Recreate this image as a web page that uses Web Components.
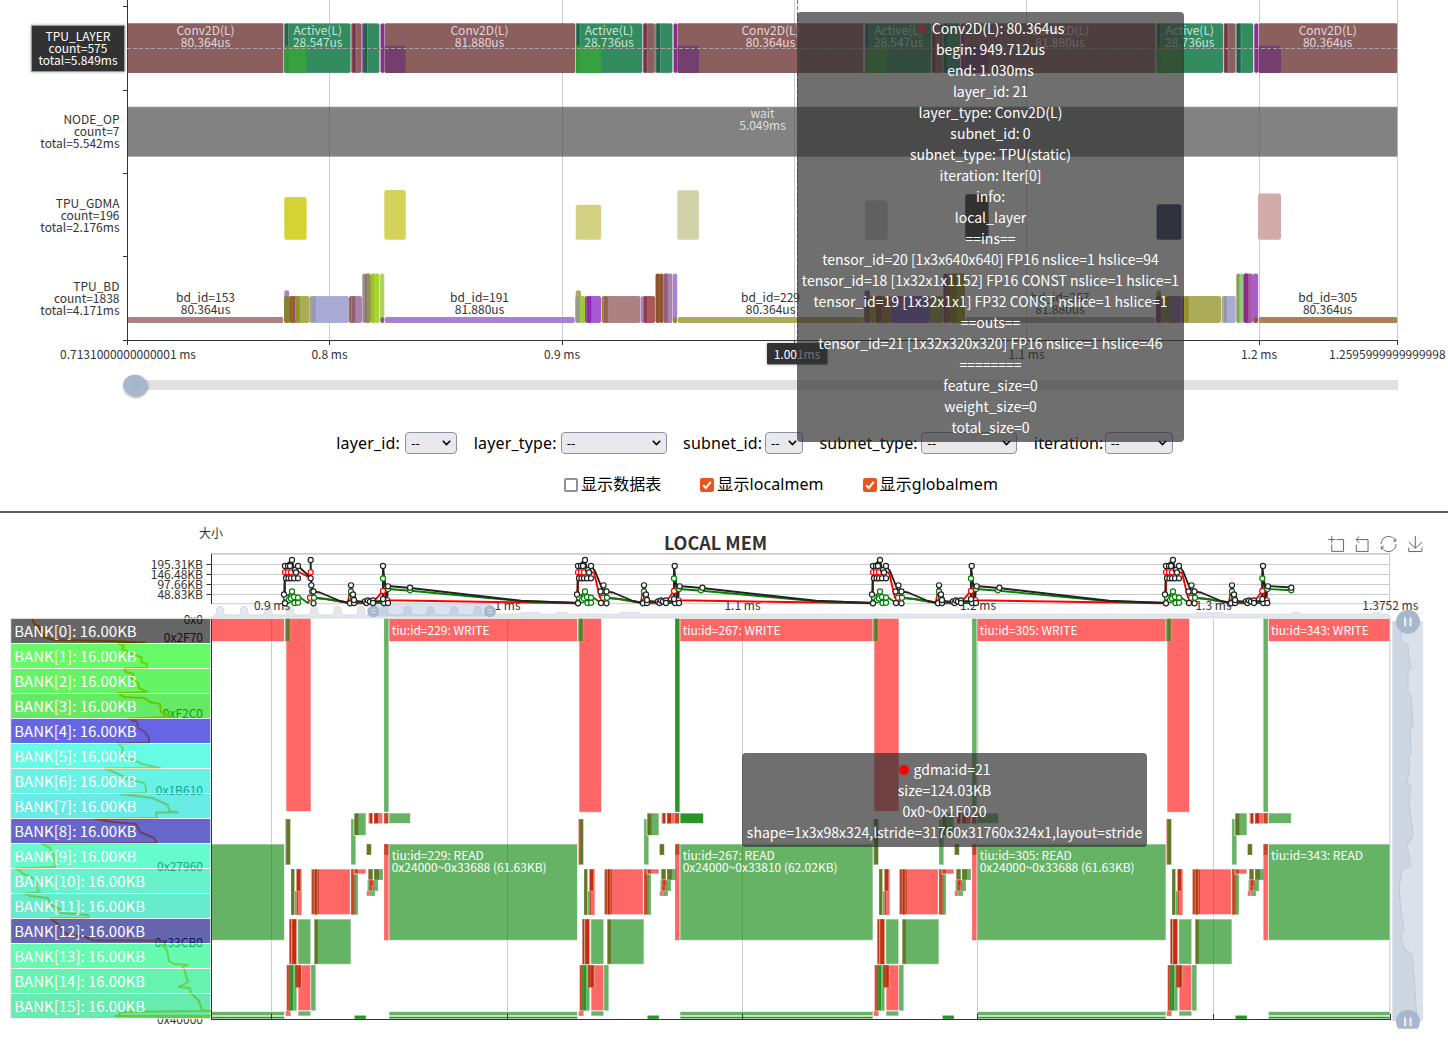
<!DOCTYPE html>
<html lang="zh">
<head>
<meta charset="utf-8">
<title>TPU Profile</title>
<style>
html,body{margin:0;background:#fff}
body{font-family:"Noto Sans CJK SC","Noto Sans",sans-serif;width:1448px;height:1043px;overflow:hidden}
</style>
</head>
<body>
<profile-page></profile-page>
<script>
const FONT='"Noto Sans CJK SC","Noto Sans",sans-serif';
const rect=(x1,y1,x2,y2,f,r=0,extra='')=>`<rect x="${x1}" y="${y1}" width="${(x2-x1).toFixed(2)}" height="${(y2-y1).toFixed(2)}" fill="${f}" rx="${r}" ${extra}/>`;
const line=(x1,y1,x2,y2,c,extra='')=>`<path d="M${x1} ${y1}L${x2} ${y2}" stroke="${c}" fill="none" ${extra}/>`;
const text=(x,y,s,a='middle',c='#333',size=12,extra='')=>`<text x="${x}" y="${y+size*.36}" text-anchor="${a}" fill="${c}" font-size="${size}" ${extra}>${s}</text>`;

/* Gantt timeline of the TPU engines */
class TimelineChart extends HTMLElement{
  connectedCallback(){
    let s='';
    const grid=[329.5,562.5,794.5,1026.5,1259.5,1397.5];
    for(const x of grid) s+=line(x,0,x,340,'#ccc');
    const conv='#8c5f5f',green='#338b60',dark='#1f6349',maroon='#7a3247',purple='#8b2d8b';
    const soft='stroke="#fff" stroke-opacity=".35" stroke-width=".6"';
    const bar=(x1,x2,f,y=23.3,r=2)=>rect(x1,y,x2,73,f,r,soft);
    for(const [a,b] of [[127.5,283.5],[385,575],[677.5,863.5],[965,1155.5],[1259,1397.2]]) s+=rect(a,23.3,b,73,conv,1);
    const layers=[[284,306.5,350.8,352,361.7,363,379.6,384.7,405.7],[575.5,601.3,642.5,643.3,655,656,672.6,677.5,699],
      [864.5,887.5,931.5,932,943,943.5,960,965,988],[1156.2,1181.5,1223.3,1224,1235.7,1236.5,1253.4,1258.5,1281]];
    for(const [a,b,c,d,e,f,g,h,i] of layers){
      s+=bar(a,a+2,purple)+bar(a+.5,c,green)+bar(a+.7,a+4.5,dark)+bar(c+.3,c+3,purple)+bar(d,e,conv)+bar(d,d+4,maroon)
        +bar(e,e+2,purple)+bar(f,g,green)+bar(f,f+4.5,dark)+bar(g+.8,h,purple)+rect(a+.5,45.7,b,73,'#37a03f',2)+rect(a+.5,45.7,a+4.5,73,'#329a3a',2)+rect(h,45.7,i,73,'#743f6f',2);
    }
    s+=rect(127.5,107,1397.2,156.5,'#828282',0,'stroke="#aaa" stroke-width=".7"');
    for(const x of grid.slice(0,5)) s+=line(x,107,x,156.5,'#737373');
    for(const [a,y,b,f] of [[284.3,197,306.6,'#d3d333'],[384.3,190,405.8,'#d3d35c'],[575.7,204.7,601.2,'#d3d182'],[677.3,190.2,698.9,'#d2d2a8'],
      [865,200.5,887.7,'#cbcbcb'],[965.2,194.3,988.5,'#2f2f2f'],[1156.5,204.2,1181.5,'#35355d'],[1258,193.6,1281,'#d3abab']])
      s+=rect(a,y,b,239.8,f,2.5);
    for(const [a,b,f] of [[127.5,283.2,'#ab8181'],[385,574.7,'#a881d4'],[678,863.7,'#abab59'],[965.5,1155.5,'#a4a4a4'],[1259,1397.2,'#ab8159']])
      s+=rect(a,317,b,323,f,1.5,'');
    const bd=[
      [284.3,289.2,290.3,'#a881d4'],[284,290,296,'#84842c'],[289,295,296,'#99631f'],[293,297,296,'#91468c'],[295.5,309.5,296,'#abab59'],[295.5,300,296,'#93932a'],[309.5,314,296,'#a0a080'],[312,349,296,'#a9abd4'],[312,316,296,'#9496bb'],[349,354,296,'#a0623a'],[351.5,362,296,'#ab81ab'],[351.5,355.5,296,'#8f5f73'],
      [362.3,366,273.5,'#9b8a8a'],[365,370,273.5,'#877060'],[367,371,273.5,'#929248'],[371,375.5,273.5,'#96c21f'],[374.5,379.5,273.5,'#a9d42e'],[380,384.3,273.5,'#acd45e'],[380.3,384.3,317,'#8c5a78'],
      [575.7,581,290.3,'#abab59'],[575.3,580.7,296,'#9a9a8a'],[580,585.5,296,'#9fc933'],[585,588,296,'#9c4b2b'],[586.5,601,296,'#a959d4'],[586.5,591.5,296,'#8a2bb5'],[601.5,606,296,'#a8842a'],[603.5,640.5,296,'#ab8181'],[603.5,608,296,'#936257'],[640.7,645,296,'#a783c8'],[643.5,655.2,296,'#a95959'],[643.5,647.3,296,'#93394e'],
      [655.5,660,273.5,'#8a5030'],[659,663.7,273.5,'#94581f'],[663.5,672.5,273.5,'#ab81ab'],[663.5,668,273.5,'#8f5f88'],[672.8,677.2,273.5,'#a881d4'],[673,677.2,317,'#8f8f1f'],
      [864.5,870,290.3,'#8c45c0'],[864.2,870,296,'#87544a'],[870,875,296,'#94921f'],[875,891,296,'#a06a35'],[876,882,296,'#7f4524'],[891,930,296,'#7655bb'],[891,897,296,'#66559c'],[930,943,296,'#94943f'],
      [943.3,947.3,273.5,'#88385f'],[947,951,273.5,'#875c24'],[951,965,273.5,'#97971f'],[951,957,273.5,'#7c7c14'],
      [1156.5,1161,290.3,'#7fa316'],[1156,1162,296,'#783a6c'],[1161,1166,296,'#84842c'],[1166,1170,296,'#6b7c2d'],[1169,1181.5,296,'#816296'],[1181.8,1185,296,'#8a2bb5'],[1184,1221,296,'#abab59'],[1184,1189,296,'#93932a'],[1221.5,1225,296,'#abab81'],[1223.5,1235.8,296,'#a9abd4'],[1223.5,1227,296,'#9496ab'],
      [1236.3,1240.5,273.5,'#8d9d50'],[1239.5,1243.8,273.5,'#8fcb82'],[1243.5,1253,273.5,'#ab59a9'],[1243.5,1248.5,273.5,'#8f2b85'],[1253,1258.2,273.5,'#a959d4'],[1253.7,1258.2,317,'#8f5a2a']];
    for(const [a,b,y,f] of bd) s+=rect(a,y,b,323,f,2,'stroke="#fff" stroke-opacity=".2" stroke-width=".4"');
    s+=line(127.5,0,127.5,345,'#333')+line(123,340.5,1397.5,340.5,'#333');
    for(const y of [6.5,90.5,173.5,256.5]) s+=line(123,y,127,y,'#333');
    for(const x of grid) s+=line(x,340,x,345,'#333');
    const pale='#fff" fill-opacity=".75';
    const two=(x,y,a,b,c)=>text(x,y,a,'middle',c)+text(x,y+12,b,'middle',c);
    s+=two(205.5,30.5,'Conv2D(L)','80.364us',pale)+two(479.5,30.5,'Conv2D(L)','81.880us',pale)+two(770.5,30.5,'Conv2D(L)','80.364us',pale)+two(1060,30.5,'Conv2D(L)','81.880us',pale)+two(1327.7,30.5,'Conv2D(L)','80.364us',pale);
    s+=two(317.7,30.5,'Active(L)','28.547us',pale)+two(609,30.5,'Active(L)','28.736us',pale)+two(898.5,30.5,'Active(L)','28.547us',pale)+two(1189.7,30.5,'Active(L)','28.736us',pale);
    s+=two(762.5,113.5,'wait','5.049ms',pale);
    [[205.5,153,'80.364us'],[479.5,191,'81.880us'],[770.5,229,'80.364us'],[1060,267,'81.880us'],[1327.7,305,'80.364us']].forEach(([x,n,t])=>s+=two(x,297.5,'bd_id='+n,t,'#333'));
    [['NODE_OP','count=7','total=5.542ms'],['TPU_GDMA','count=196','total=2.176ms'],['TPU_BD','count=1838','total=4.171ms']].forEach((l,i)=>l.forEach((t,j)=>s+=text(119.5,[119.5,203.5,286.5][i]+12*j,t,'end')));
    s+=line(127,48.5,1397,48.5,'#aaa2a2','stroke-dasharray="4 2"')+line(797.5,0,797.5,340,'#777','stroke-dasharray="4 2"');
    s+=rect(31.5,25.5,124.5,71.5,'#333',0,'stroke="#999" filter="url(#sh)"');
    ['TPU_LAYER','count=575','total=5.849ms'].forEach((t,j)=>s+=text(78,36.5+12*j,t,'middle','#fff'));
    [[128,'0.7131000000000001 ms'],[329.5,'0.8 ms'],[562,'0.9 ms'],[1026.5,'1.1 ms'],[1259,'1.2 ms']].forEach(([x,t])=>s+=text(x,354.5,t));
    s+=text(1329,354.5,'1.2595999999999998','start');
    s+=rect(767,343,827.5,364.5,'#333',1,'filter="url(#sh)"')+text(797,354.5,'1.001ms','middle','#fff');
    s+=rect(127,380,1398,390,'#e1e1e1');
    s+=`<ellipse cx="134.8" cy="385.2" rx="11.7" ry="10.5" fill="#a7b7cc" filter="url(#sh2)"/>`;
    for(const y of [382.5,385,387.5]) s+=line(133,y,140,y,'#9caaba','stroke-width=".7"');
    this.attachShadow({mode:'open'}).innerHTML=`<style>:host{display:block;height:410px;flex:none}svg{display:block;font-family:${FONT}}</style>
    <svg width="1448" height="410" viewBox="0 0 1448 410"><defs><filter id="sh" x="-20%" y="-30%" width="140%" height="160%"><feDropShadow dx="0" dy="0" stdDeviation="1.5" flood-color="#aaa"/></filter><filter id="sh2" x="-50%" y="-50%" width="200%" height="200%"><feDropShadow dx="1" dy="1.5" stdDeviation="1.5" flood-color="#000" flood-opacity=".45"/></filter></defs>${s}</svg>`;
  }
}
customElements.define('timeline-chart',TimelineChart);

/* Labelled dropdown */
class FilterSelect extends HTMLElement{
  connectedCallback(){
    const lw=this.getAttribute('label-width'),w=this.getAttribute('width');
    this.attachShadow({mode:'open'}).innerHTML=`<style>
    :host{display:flex;align-items:center;gap:4px;font:16px/22px "Noto Sans","Noto Sans CJK SC",sans-serif;color:#000}
    label{width:${lw}px;white-space:nowrap;letter-spacing:.17px}
    .box{box-sizing:border-box;width:${w}px;height:22px;border:1px solid #8f8f9d;border-radius:4px;background:#e9e9ed;display:flex;align-items:center;justify-content:space-between;padding:0 5px;font-size:13.33px}
    </style><label><slot></slot></label><span class="box"><span>--</span><svg width="9" height="6" viewBox="0 0 9 6"><path d="M.8.8L4.5 4.6 8.2.8" fill="none" stroke="#000" stroke-width="1.6"/></svg></span>`;
  }
}
customElements.define('filter-select',FilterSelect);

class CheckOption extends HTMLElement{
  connectedCallback(){
    const on=this.hasAttribute('checked');
    this.attachShadow({mode:'open'}).innerHTML=`<style>
    :host{display:flex;align-items:center;gap:4px;font:16px/24px "Noto Sans","Noto Sans CJK SC",sans-serif;color:#000;white-space:nowrap;letter-spacing:.07px}
    .b{box-sizing:border-box;width:14px;height:14px;margin-right:-1px;border-radius:2px;border:${on?'0':'2px solid #8f8f9d'};background:${on?'#e95420':'#fff'};display:flex;position:relative;top:1px}
    </style><span class="b">${on?'<svg width="14" height="14"><path d="M3.2 7.2L5.8 9.9 10.8 3.8" fill="none" stroke="#fff" stroke-width="2"/></svg>':''}</span><span><slot></slot></span>`;
  }
}
customElements.define('check-option',CheckOption);

/* Local memory occupancy */
class MemoryChart extends HTMLElement{
  connectedCallback(){
    let s='';
    s+=text(715.5,544,'LOCAL MEM','middle','#333',18,'font-weight="bold"')+text(211,533.5,'大小');
    const icon=(x,y,k,d)=>`<path transform="translate(${x} ${y}) scale(${k})" d="${d}" fill="none" stroke="#666" stroke-width="${1/k}"/>`;
    s+=icon(1328.2,536,.265,'M0,13.5h26.9 M13.5,26.9V0 M32.1,13.5H58V58H13.5 V32.1');
    s+=icon(1353.5,536,.265,'M22,1.4L9.9,13.5l12.3,12.3 M10.3,13.5H54.9v44.6 H10.3v-26');
    s+=icon(1380.5,536,.268,'M3.8,33.4 M47,18.9h9.8V8.7 M56.3,20.1 C52.1,9,40.5,0.6,26.8,2.1C12.6,3.7,1.6,16.2,2.1,30.6 M13,41.1H3.1v10.2 M3.7,39.9c4.2,11.1,15.8,19.5,29.5,18 c14.2-1.6,25.2-14.1,24.7-28.5');
    s+=icon(1407.5,536,.268,'M4.7,22.9L29.3,45.5L54.7,23.4M4.6,43.6L4.6,58L53.8,58L53.8,43.6M29.2,45.1L29.2,0');
    /* overview slider */
    s+=rect(213,604,1391.5,616.5,'#fff');
    let d='M214 615.5';
    for(const x of [220,244,268,290,314,337.5,361,384,407.5,430.5,454,477.5]) d+=`L${x-5} 615 L${x-3.5} 613 L${x-3} 608 L${x-2} 606.5 L${x+2} 606.8 L${x+3.3} 608 L${x+4} 614 L${x+6} 615`;
    for(let x=490;x<1388;x+=4){const h=x<540&&x>518||x>556&&x<570||x>620&&x<640||x>1196&&x<1224||x>1290&&x<1300||x>1370&&x<1382;d+=`L${x} ${h?612:615} L${x+2} ${h?613.5:613.5}`;}
    s+=`<path d="${d}L1390 616.5L214 616.5Z" fill="#e4e7ec" stroke="#d0d6de" stroke-width=".8"/>`;
    s+=rect(373,604,490,616.5,'#87a5cf',0,'fill-opacity=".32"');
    s+=rect(11,616.3,1391.5,618.7,'#e2e5e9',0,'')+rect(0,616,210,618,'#fff');
    /* size plot frame */
    s+=line(211,553.8,1389.5,553.8,'#ccc','stroke-width="1.7"')+line(1389.5,553,1389.5,604,'#ccc');
    for(const y of [564.5,574.5,584.5,594.5,603.7]) s+=line(211,y,1389.5,y,'#ccc');
    s+=line(211.5,554,211.5,604,'#333');
    ['195.31KB','146.48KB','97.66KB','48.83KB'].forEach((t,i)=>{const y=564.5+10*i;s+=line(206.5,y,211,y,'#333')+text(203,y,t,'end')});
    [[272,'0.9 ms'],[507.5,'1 ms'],[742.5,'1.1 ms'],[978,'1.2 ms'],[1213.5,'1.3 ms'],[1390.3,'1.3752 ms']].forEach(([x,t])=>s+=text(x,605.5,t));
    for(const x of [373.3,490]) s+=`<circle cx="${x}" cy="611.3" r="6" fill="#a7b7cc"/>`+line(x-2.5,609.8,x+2.5,609.8,'#dde4ee')+line(x-2.5,612.8,x+2.5,612.8,'#dde4ee');
    /* curves */
    const bases=[286,579,874,1167],reads=[389,680,977,1268.3],P=a=>a.map(p=>p.join(' ')).join('L');
    const curve=(c,pts)=>`<path d="M${P(pts)}" fill="none" stroke="${c}" stroke-width="1.9" stroke-linejoin="round"/>`;
    const dot=(c,x,y)=>`<circle cx="${x}" cy="${y}" r="2.55" fill="#fff" stroke="${c}" stroke-width="1.2"/>`;
    bases.forEach((b,i)=>{
      const r=reads[i],next=i<3?bases[i+1]-3:null,first=i===0;
      const tailR=next?[[r+90,601.8],[next,603.3]]:[],tailG=next?[[r+21.5,590.7],[next-55,601.2],[next,602.7]]:[[r+23,590.3]],tailB=next?[[r+21.5,588],[next-55,600.7],[next,603]]:[[r+23,587.5]];
      s+=curve('red',[[b-1,603],[b-1,572.3],[b+11,572.3],...(first?[[b+13,572],[b+24.5,578]]:[[b+15,572.5],[b+21,597.7]]),[b+28,597.5],[b+40,599],[b+64,603.3],[b+86,603.3],[r-6,591],[r-1,600.3],...tailR]);
      s+=curve('green',[[b-1,603],[b-1,599],[b+6,591.5],[b+9,602],[b+13,596.7],[b+22,603],[b+24.5,597.7],[b+40,599],[b+64,603],[b+65,591.5],[b+68,601],[b+84,603],[r-6,603],[r-6,578.5],[r-1,589],...tailG]);
      s+=curve('#222',[[b-2,603],[b-1,566],[b+6,560],[b+8,570],[b+12,566],...(first?[[b+25,578],[b+24.5,560],[b+25.5,585]]:[[b+16,571],[b+24,591]]),[b+27,591.5],[b+34,592.5],[b+54,601],[b+62,602.5],[b+65,585.3],[b+67,594.5],[b+71,601.5],[b+84,601.5],[r-6,601],[r-6,566],[r-2,603],[r-1,586],...tailB]);
      for(const [x,y] of [[-1,572.3],[2,572.3],[5,572.3],[10,572.3],[24,597.7],[65,597.7]]) s+=dot('red',b+x,y);
      if(first) s+=dot('red',b+24.7,572.3);
      for(const [x,y] of [[-1,603],[0,597.5],[3,600],[6,591.5],[5,598.5],[8,597],[8.5,603],[12,597.7],[12,602.7],[26,591.5],[28,597.7],[65,591.5],[67,597.7]]) s+=dot('green',b+x,y);
      s+=dot('red',r-6,591)+dot('red',r-1.5,600.3)+dot('green',r-6,578.5)+dot('green',r-1,589)+dot('green',r+(next?21:23),590.3);
      for(const [x,y] of [[-1,566],[2,566],[4,566],[0,578.3],[2.5,578.3],[5,578.3],[8,578.3],[12,578.3],[6,560],[9,570],[10,572.5],[12,566],[-2,594.5],[-1,603.3],[27.5,591.5],[27.5,603.3],[65,585.3],[67,594.5],[64,603.3],[68,603],[68,600],[79,601.5],[80.5,603],[82,600.5],[84,601.5],[87,600.5],[87,603]]) s+=dot('#222',b+x,y);
      s+=first?dot('#222',b+24.7,560)+dot('#222',b+24.7,578.3)+dot('#222',b+25.3,585.3):dot('#222',b+24.5,585.3)+dot('#222',b+21.5,591.5)+dot('#222',b+22,603);
      const q=first?0:.7;
      for(const [x,y] of [[-6+q,566],[-1+q,586.3],[next?21+2*q:23,587.7],[-5,603],[-6,599],[-1,603]]) s+=dot('#222',r+x,y);
    });
    /* memory map */
    let m='';
    for(const x of [271.5,507.5,742.5,977.5,1213.5]) m+=line(x,619,x,1019,'#ccc');
    m+=line(1390,619,1390,1019,'#ccc','stroke-width="1.5"');
    const draw=(f,a,b,y1,y2)=>m+=rect(a,y1,b,y2,f,0,`fill-opacity=".6" stroke="#fff" stroke-opacity="${b-a<12?.4:.65}" stroke-width="${b-a<12?.5:1}"`);
    const R=(...p)=>draw('#f00',...p),G=(...p)=>draw('#008000',...p);
    const spans=[[211,284.5],[389,577.5],[680,873],[977,1166],[1268.3,1390]];
    for(const [a,b] of spans){R(a,b,618.5,641.5);G(a,b,844,940.3);G(a,b,1011.5,1015.9);G(a,b,1016,1019);G(a,b,1016.4,1018.8);}
    const items=[
      'R0,25,618,811.5','G-1,4,618,641.5','R-.7,1,819,864.7','R.5,4.2,819,864.7','G0,4.4,819,864.7',
      'G65,69.7,819,864.7','R68,72.5,813,835.5','G68,80,813,835.5',
      'R82.5,86.5,813,823.5','G83.5,86.5,813,823.5','R83.5,86.5,813,823.5',
      'R88,96.5,813,823.5','G88,92.5,813,823.5','R88,92.5,813,823.5',
      'R80.5,85.2,844,855','G80.7,85.2,844,855',
      'G25,29.5,869,914.7','G28.5,33,869,914.7','R25.3,64.3,869,914.7','G28.5,31,869,914.7','R28.5,31,869,914.7',
      'G65,69,869,914.7','R65,69.5,869,914.7','G68.5,72,869,914.7','R68,80,869,874',
      'R82,86.5,869,880','G82.5,87,869,880','R88,93,869,880','G88,97,869,880',
      'G81.5,86,880,891','R83,88,880,891','G87,92,880,891','R84,87,880,886',
      'R80.7,84,891,896','G84,89,891,896',
      'R5,8.3,869,915','G5,8.6,869,915','G8.7,12,891,915','R10.5,15.8,869,915','G10.5,14.7,869,891','R10.5,14.7,869,891',
      'R3,5,919,964.3','G3.5,7,919,964.3','R3.5,5.7,919,964.3','R6,10.5,919,964.3','G6,10.5,919,964.3','R6,10.5,919,964.3',
      'G11.7,24.8,919,964.3','R28,32,919,964.3','G28,65,919,964.3',
      'R.7,4.5,965,1010.7','G1.5,4.5,965,1010.7','R.7,3,965,1010.7','G4.5,10.7,965,1010.7','G3,7.3,965,1010.7',
      'R12,24.8,965,1010.7','G9,15.3,965,987.7','R9,15,965,987.7','G25,29.7,965,1010.7',
      'R-.3,4.7,1011,1016','G12,24.8,1011,1016','G68.5,80,1015.5,1019','G68.5,80,1015.5,1019'];
    bases.forEach((b,i)=>{
      for(const t of items){
        let [x1,x2,y1,y2]=t.slice(1).split(',').map(Number);
        if(y2===811.5&&(i===1||i===3)){x2=22.5;y2=812.3}
        (t[0]==='R'?R:G)(b+x1,b+x2,y1,y2);
      }
      const r=reads[i];
      G(r-5,r-.3,618,812);G(r-5,r-.3,813,823.5);R(r-5,r-.3,813,823.5);G(r,r+(i===3?23:i===1?23.5:21.5),813,823.5);G(r-5,r-.3,844,855);R(r-5,r-.3,844,940.3);
      if(i===1){G(r-5,r-.3,618,812);G(r,r+23.5,813,823.5);}
    });
    s+=`<clipPath id="plot"><rect x="211" y="618.7" width="1179.5" height="401"/></clipPath><g clip-path="url(#plot)">${m}</g>`;
    s+=line(211.5,619,211.5,1019,'#333')+line(211,1019.5,1390.5,1019.5,'#333')+line(1390.5,1014,1390.5,1020,'#333')+line(1213.5,1014,1213.5,1019,'#333');
    for(const x of [271.5,507.5,742.5,977.5]) s+=line(x,1014,x,1019,'#154a15');
    const lab=(x,y,t)=>text(x,y,t,'start','#fff');
    [[391.7,229,'0x33688 (61.63KB)'],[682.7,267,'0x33810 (62.02KB)'],[979.7,305,'0x33688 (61.63KB)'],[1271,343,'']].forEach(([x,n,t])=>{
      s+=lab(x,630.5,`tiu:id=${n}: WRITE`)+lab(x,855.5,`tiu:id=${n}: READ`); if(t) s+=lab(x,867.7,'0x24000~'+t);
    });
    /* banks */
    [['0x0',619.5],['0x2F70',637.5],['0xF2C0',713.5],['0x1B610',790.5],['0x27960',866.7],['0x33CB0',942.7],['0x40000',1019.7]].forEach(([t,y])=>s+=text(203,y,t,'end'));
    const prof=[[32,619.3],[35,625],[39,626],[40,632],[43,633],[44,637],[54,640],[112,641],[145,642.5],[118,643.5],[124,646],[122,649],[130,653],[138,656],[142,658],[141,662],[147,664],[147,667.8],[124,668.5],[126,672],[134,674],[131,678],[138,683],[139,688],[147,692],[118,693],[124,697],[144,698],[150,702],[160,704],[161,712],[166,714],[173,717],[128,718.5],[137,722],[138,728],[145,732],[149,738],[149,742.5],[118,743.5],[123,748],[120,757],[134,760],[142,764],[160,768],[105,768.5],[116,773],[124,777],[130,780],[144,783],[146,788],[146,793],[120,794],[152,798],[168,805],[169,811],[178,812.5],[156,812.5],[157,818],[95,819],[113,822],[136,824],[140,832],[154,838],[157,843],[41,843.5],[50,848],[54,856],[55,867],[16,868.5],[24,874],[36,880],[37,888],[40,892],[24,893.5],[30,896],[48,898],[51,905],[60,909],[61,913],[88,915],[89,918],[50,918.5],[57,923],[64,932],[68,935],[85,937],[93,940.5],[159,940.5],[162,945],[167,950],[169,961],[174,964],[188,965],[183,966],[185,972],[188,982],[179,987],[190,988],[191,993],[199,1001],[202,1010],[210,1011],[120,1012],[119,1015.5],[210,1015.7],[115,1016],[210,1018]];
    s+=`<path d="M${P(prof)}" fill="none" stroke="#ffa500" stroke-width="2" stroke-linejoin="round"/>`;
    const cols=['0,0,0','0,247,0','0,237,0','0,220,0','0,0,212','0,248,212','0,235,212','0,222,212','0,0,170','0,248,170','0,235,170','0,222,170','0,0,123','0,248,123','0,235,123','0,222,123'];
    cols.forEach((c,i)=>s+=rect(11,619+25*i,210.3,643.2+25*i,`rgba(${c},.6)`)+line(11,643.7+25*i,210,643.7+25*i,'#fff','stroke-opacity=".8"')+text(14.2,631.3+25*i,`BANK[${i}]: 16.00KB`,'start','#fff',15));
    s+=line(10.8,618,10.8,1019,'#ddd','stroke-width=".8"')+line(11,618.3,211,618.3,'#ddd');
    /* address slider */
    s+=rect(1392.5,621,1423,1021,'#dae1eb');
    const v=[[1401,621],[1401,640],[1408,645],[1409,657],[1411,668],[1408,671],[1408,693],[1411,695],[1413,727],[1410,729],[1411,754],[1408,757],[1410,768],[1407,783],[1411,786],[1409,802],[1413,836],[1407,845],[1411,866],[1402,870],[1399,888],[1401,912],[1404,929],[1401,935],[1404,949],[1412,954],[1414,975],[1417,1021]];
    s+=`<path d="M1392.5 621L${P(v)}L1392.5 1021Z" fill="#ced7e1"/><path d="M${P(v)}" fill="none" stroke="#bdc9d7"/>`;
    s+=`<clipPath id="end"><rect x="1390" y="600" width="40" height="428.7"/></clipPath><g clip-path="url(#end)">`;
    for(const y of [621.7,1021.7]) s+=`<circle cx="1408" cy="${y}" r="12" fill="#a7b7cc"/>`+rect(1404,y-4.3,1406.2,y+4.5,'#e9edf3')+rect(1409.5,y-4.3,1411.7,y+4.5,'#e9edf3');
    s+='</g>';
    this.attachShadow({mode:'open'}).innerHTML=`<style>:host{display:block;height:530px;flex:none}svg{display:block;font-family:${FONT}}</style><svg width="1448" height="530" viewBox="0 513 1448 530">${s}</svg>`;
  }
}
customElements.define('memory-chart',MemoryChart);

class ChartTooltip extends HTMLElement{
  connectedCallback(){
    const dot=this.getAttribute('dot');
    this.attachShadow({mode:'open'}).innerHTML=`<style>
    :host{display:flex;flex-direction:column;align-items:center;box-sizing:border-box;padding-top:6px;border-radius:4px;background:rgba(50,50,50,.7);color:#fff;font:14px/21px ${FONT};text-align:center;white-space:pre}
    i{display:inline-block;width:10px;height:10px;border-radius:50%;margin-right:5px;background:${dot}}
    </style><div><i></i><slot></slot></div>`;
  }
}
customElements.define('chart-tooltip',ChartTooltip);

class ProfilePage extends HTMLElement{
  connectedCallback(){
    this.attachShadow({mode:'open'}).innerHTML=`<style>
    :host{display:flex;flex-direction:column;position:relative;width:1448px;height:1043px;overflow:hidden;background:#fff}
    .filters{display:flex;gap:16.4px;padding:21px 0 0 336.3px;height:24px;flex:none}
    .checks{display:flex;padding:17px 0 0 564px;height:24px;flex:none;gap:39px}
    .rule{margin-top:15px;height:2px;background:#5c5c5c;flex:none}
    chart-tooltip{position:absolute}
    .layer{left:797px;top:12px;width:387px;height:430px}
    .mem{left:742px;top:753px;width:405px;height:94px}
    </style>
    <timeline-chart></timeline-chart>
    <div class="filters">
      <filter-select label-width="65" width="52">layer_id:</filter-select>
      <filter-select label-width="83" width="106">layer_type:</filter-select>
      <filter-select label-width="78" width="38">subnet_id:</filter-select>
      <filter-select label-width="98" width="96">subnet_type:</filter-select>
      <filter-select label-width="67" width="68">iteration:</filter-select>
    </div>
    <div class="checks"><check-option>显示数据表</check-option><check-option checked>显示localmem</check-option><check-option checked>显示globalmem</check-option></div>
    <div class="rule"></div>
    <memory-chart></memory-chart>
    <chart-tooltip class="layer" dot="#6b3333">Conv2D(L): 80.364us
begin: 949.712us
end: 1.030ms
layer_id: 21
layer_type: Conv2D(L)
subnet_id: 0
subnet_type: TPU(static)
iteration: Iter[0]
info:
local_layer
==ins==
tensor_id=20 [1x3x640x640] FP16 nslice=1 hslice=94
tensor_id=18 [1x32x1x1152] FP16 CONST nslice=1 hslice=1
tensor_id=19 [1x32x1x1] FP32 CONST nslice=1 hslice=1
==outs==
tensor_id=21 [1x32x320x320] FP16 nslice=1 hslice=46
========
feature_size=0
weight_size=0
total_size=0</chart-tooltip>
    <chart-tooltip class="mem" dot="#f00">gdma:id=21
size=124.03KB
0x0~0x1F020
shape=1x3x98x324,lstride=31760x31760x324x1,layout=stride</chart-tooltip>`;
  }
}
customElements.define('profile-page',ProfilePage);
</script>
</body>
</html>
